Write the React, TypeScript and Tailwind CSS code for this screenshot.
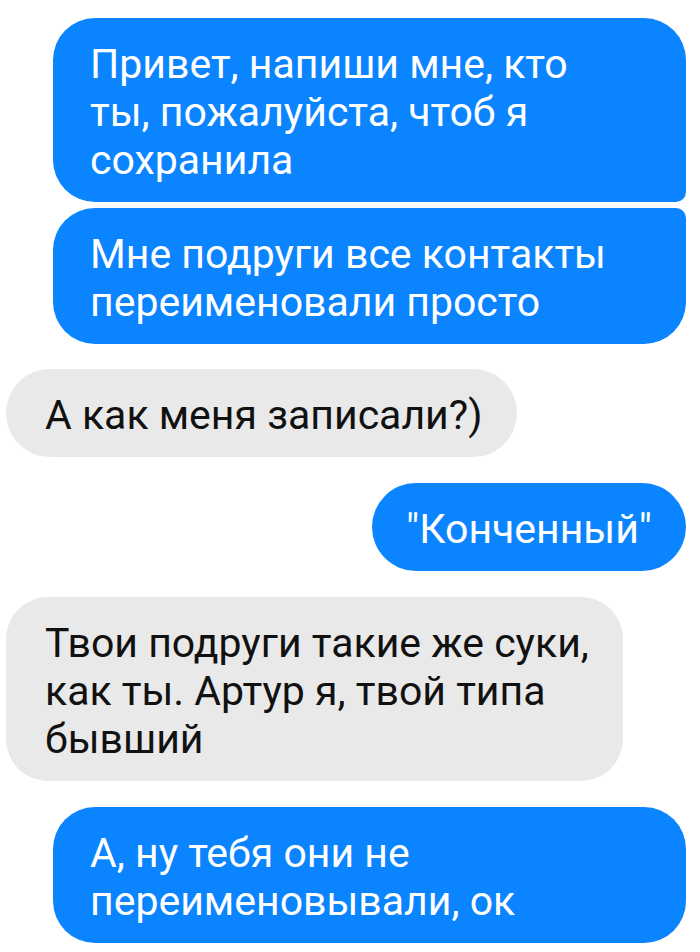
type Msg = {
  lines: string[];
  mine: boolean;
  width?: string;
  shape: string;
  gap: string;
  pad: string;
};

const messages: Msg[] = [
  {
    lines: ['Привет, напиши мне, кто', 'ты, пожалуйста, чтоб я', 'сохранила'],
    mine: true,
    width: 'w-[633px]',
    shape: 'rounded-[42px] rounded-br-[10px]',
    gap: 'mt-[18px]',
    pad: 'pl-[37px] pr-[40px]',
  },
  {
    lines: ['Мне подруги все контакты', 'переименовали просто'],
    mine: true,
    width: 'w-[633px]',
    shape: 'rounded-[42px] rounded-tr-[10px]',
    gap: 'mt-[6px]',
    pad: 'pl-[37px] pr-[40px]',
  },
  {
    lines: ['А как меня записали?)'],
    mine: false,
    shape: 'rounded-full',
    gap: 'mt-[25px]',
    pad: 'pl-[39px] pr-[35px]',
  },
  {
    lines: ['"Конченный"'],
    mine: true,
    shape: 'rounded-full',
    gap: 'mt-[26px]',
    pad: 'pl-[34px] pr-[34px]',
  },
  {
    lines: ['Твои подруги такие же суки,', 'как ты. Артур я, твой типа', 'бывший'],
    mine: false,
    width: 'w-[617px]',
    shape: 'rounded-[42px]',
    gap: 'mt-[26px]',
    pad: 'pl-[39px] pr-[30px]',
  },
  {
    lines: ['А, ну тебя они не', 'переименовывали, ок'],
    mine: true,
    width: 'w-[633px]',
    shape: 'rounded-[42px]',
    gap: 'mt-[26px]',
    pad: 'pl-[37px] pr-[40px]',
  },
];

export default function App() {
  return (
    <div className="w-[700px] h-[952px] bg-white overflow-hidden font-['Roboto',sans-serif] text-[41px] leading-[48px]">
      <div className="flex flex-col pl-[6px] pr-[14px]">
        {messages.map((m, i) => (
          <div key={i} className={`${m.gap} flex ${m.mine ? 'justify-end' : 'justify-start'}`}>
            <div
              className={`${m.width ?? ''} ${m.shape} ${m.pad} ${
                m.mine ? 'bg-[#0a84ff] text-white' : 'bg-[#e9e9e9] text-[#111]'
              } pt-[22px] pb-[18px]`}
            >
              {m.lines.map((l, j) => (
                <div key={j} className="whitespace-nowrap">
                  {l}
                </div>
              ))}
            </div>
          </div>
        ))}
      </div>
    </div>
  );
}
